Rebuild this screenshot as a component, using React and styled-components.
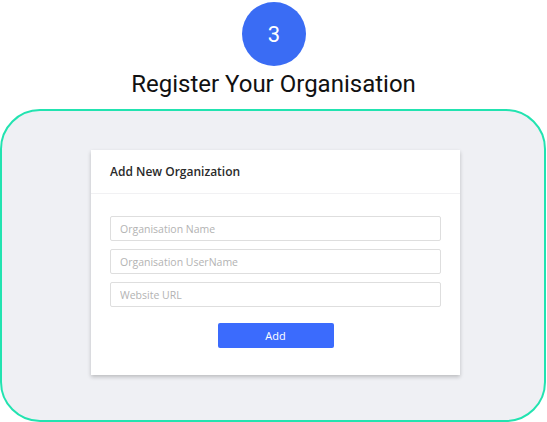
import React from 'react';
import styled, { createGlobalStyle } from 'styled-components';

const Global = createGlobalStyle`
  html, body { margin: 0; padding: 0; background: #fff; }
  body { width: 547px; height: 422px; overflow: hidden; }
  * { box-sizing: border-box; }
`;

const Page = styled.div`
  display: flex;
  flex-direction: column;
  align-items: center;
  padding-top: 2px;
`;

const StepCircle = styled.div`
  width: 64px;
  height: 64px;
  border-radius: 50%;
  background: #3a6cf4;
  color: #fff;
  display: flex;
  align-items: center;
  justify-content: center;
  font-family: Roboto, sans-serif;
  font-size: 22px;
  margin-left: 1px;
`;

const Title = styled.h2`
  margin: 2px 0 0;
  font-family: Roboto, sans-serif;
  font-weight: 400;
  font-size: 24px;
  line-height: 32px;
  color: #111;
`;

const Frame = styled.div`
  margin-top: 9px;
  width: 546px;
  height: 313px;
  align-self: flex-start;
  border: 2px solid #22e3b0;
  border-radius: 40px;
  background: #eff0f4;
  display: flex;
  justify-content: center;
  padding-top: 39px;
`;

const Card = styled.div`
  width: 369px;
  height: 225px;
  background: #fff;
  box-shadow: 0 2px 4px rgba(0, 0, 0, 0.22);
  font-family: "Open Sans", "Noto Sans", sans-serif;
  margin-left: 5px;
`;

const CardHeader = styled.div`
  height: 44px;
  border-bottom: 1px solid #f1f1f3;
  padding: 0 19px;
  display: flex;
  align-items: center;
  font-size: 12px;
  font-weight: 600;
  color: #2a2a2a;
`;

const Form = styled.form`
  padding: 22px 19px 0;
  display: flex;
  flex-direction: column;
  gap: 8px;
`;

const Input = styled.input`
  width: 331px;
  height: 25px;
  border: 1px solid #dedede;
  border-radius: 2px;
  padding: 0 9px;
  font-family: inherit;
  font-size: 10.5px;
  outline: none;
  &::placeholder { color: #b3b3b3; }
`;

const Button = styled.button`
  align-self: center;
  margin-top: 8px;
  width: 116px;
  height: 25px;
  border: none;
  border-radius: 2px;
  background: #3b6bfd;
  color: #fff;
  font-family: inherit;
  font-size: 11px;
`;

export default function App() {
  return (
    <>
      <Global />
      <Page>
        <StepCircle>3</StepCircle>
        <Title>Register Your Organisation</Title>
        <Frame>
          <Card>
            <CardHeader>Add New Organization</CardHeader>
            <Form onSubmit={e => e.preventDefault()}>
              <Input placeholder="Organisation Name" />
              <Input placeholder="Organisation UserName" />
              <Input placeholder="Website URL" />
              <Button type="button">Add</Button>
            </Form>
          </Card>
        </Frame>
      </Page>
    </>
  );
}
